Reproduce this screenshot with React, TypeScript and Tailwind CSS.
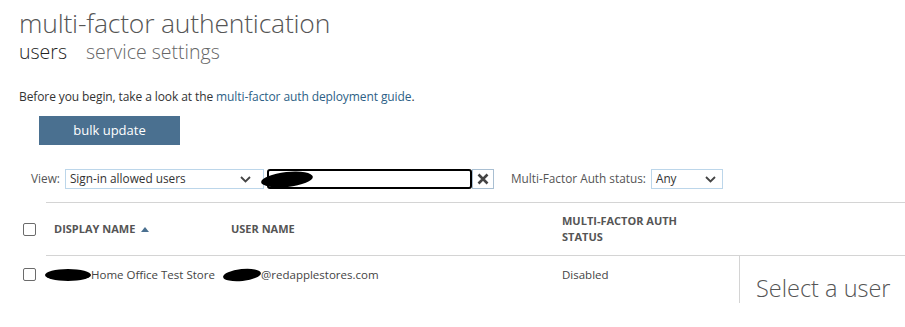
import React from "react";

const Check = () => (
  <span className="inline-block w-[13px] h-[13px] border border-[#6b6b6b] rounded-[2px] bg-white" />
);

const Chevron = () => (
  <svg width="11" height="7" viewBox="0 0 11 7" className="text-[#444]">
    <path d="M1 1 L5.5 5.5 L10 1" fill="none" stroke="currentColor" strokeWidth="1.8" />
  </svg>
);

export default function App() {
  return (
    <div
      className="w-[905px] h-[327px] overflow-hidden bg-white text-[#333]"
      style={{ fontFamily: '"Open Sans", "Noto Sans", sans-serif' }}
    >
      <div className="pl-[19px] pt-[6px]">
        <div className="text-[26.5px] font-light leading-[34px] text-[#555] tracking-[-0.2px]">
          multi-factor authentication
        </div>
        <div className="flex gap-[19px] text-[19.5px] font-light leading-[24px]">
          <span className="text-[#222]">users</span>
          <span className="text-[#666]">service settings</span>
        </div>
        <div className="mt-[25px] text-[12px] leading-[15px] text-[#333] tracking-[-0.1px]">
          Before you begin, take a look at the{" "}
          <span className="text-[#2d5f86]">multi-factor auth deployment guide</span>.
        </div>
      </div>

      <div className="pl-[39px] mt-[12px]">
        <div className="w-[141px] h-[29px] bg-[#4a7090] text-white text-[13px] flex items-center justify-center">
          bulk update
        </div>
      </div>

      <div className="flex items-center h-[20px] mt-[24px] pl-[31px] text-[11.8px] text-[#555]">
        <span className="mr-[5px]">View:</span>
        <div className="w-[199px] h-[20px] border border-[#bcd6ea] flex items-center justify-between pl-[4px] pr-[12px] text-[#333]">
          <span>Sign-in allowed users</span>
          <Chevron />
        </div>
        <div className="relative w-[205px] h-[20px] ml-[3px] border-2 border-black rounded-[3px] bg-white">
          <span className="absolute left-[-8px] top-[1px] w-[52px] h-[15px] bg-black rounded-[50%] rotate-[-6deg]" />
        </div>
        <div className="w-[22px] h-[20px] border border-[#a9bfd2] flex items-center justify-center">
          <svg width="12" height="12" viewBox="0 0 12 12">
            <path d="M1.5 1.5 L10.5 10.5 M10.5 1.5 L1.5 10.5" stroke="#444" strokeWidth="2.6" />
          </svg>
        </div>
        <span className="ml-[17px] mr-[5px]">Multi-Factor Auth status:</span>
        <div className="w-[72px] h-[20px] border border-[#bcd6ea] flex items-center justify-between pl-[4px] pr-[6px] text-[#333]">
          <span>Any</span>
          <Chevron />
        </div>
      </div>

      <div className="mt-[13px] ml-[46px] border-t border-[#d4d4d4]" />

      <div className="flex items-center h-[52px] text-[11px] font-bold text-[#555]">
        <div className="w-[46px] pl-[23px] flex items-center">
          <Check />
        </div>
        <div className="w-[177px] pl-[8px] flex items-center gap-[6px]">
          DISPLAY NAME
          <svg width="8" height="5" viewBox="0 0 8 5">
            <path d="M0 5 L4 0 L8 5 Z" fill="#4a7090" />
          </svg>
        </div>
        <div className="w-[339px] pl-[8px]">USER NAME</div>
        <div className="w-[130px] leading-[16px]">
          MULTI-FACTOR AUTH
          <br />
          STATUS
        </div>
      </div>

      <div className="flex">
        <div className="w-[739px]">
          <div className="ml-[46px] border-t border-[#d4d4d4]" />
          <div className="flex items-center h-[37px] text-[11.5px] text-[#444]">
            <div className="w-[46px] pl-[23px] flex items-center">
              <Check />
            </div>
            <div className="w-[177px] flex items-center">
              <span className="inline-block w-[46px] h-[12px] bg-black rounded-[50%] ml-[-1px]" />
              <span>Home Office Test Store</span>
            </div>
            <div className="w-[339px] flex items-center">
              <span className="inline-block w-[38px] h-[12px] bg-black rounded-[50%] rotate-[-6deg]" />
              <span>@redapplestores.com</span>
            </div>
            <div className="w-[130px]">Disabled</div>
          </div>
        </div>
        <div className="flex-1 border-l border-t border-[#d4d4d4] pl-[16px] pt-[17px]">
          <div className="text-[23.5px] font-light text-[#555] leading-[30px]">Select a user</div>
        </div>
      </div>
    </div>
  );
}
